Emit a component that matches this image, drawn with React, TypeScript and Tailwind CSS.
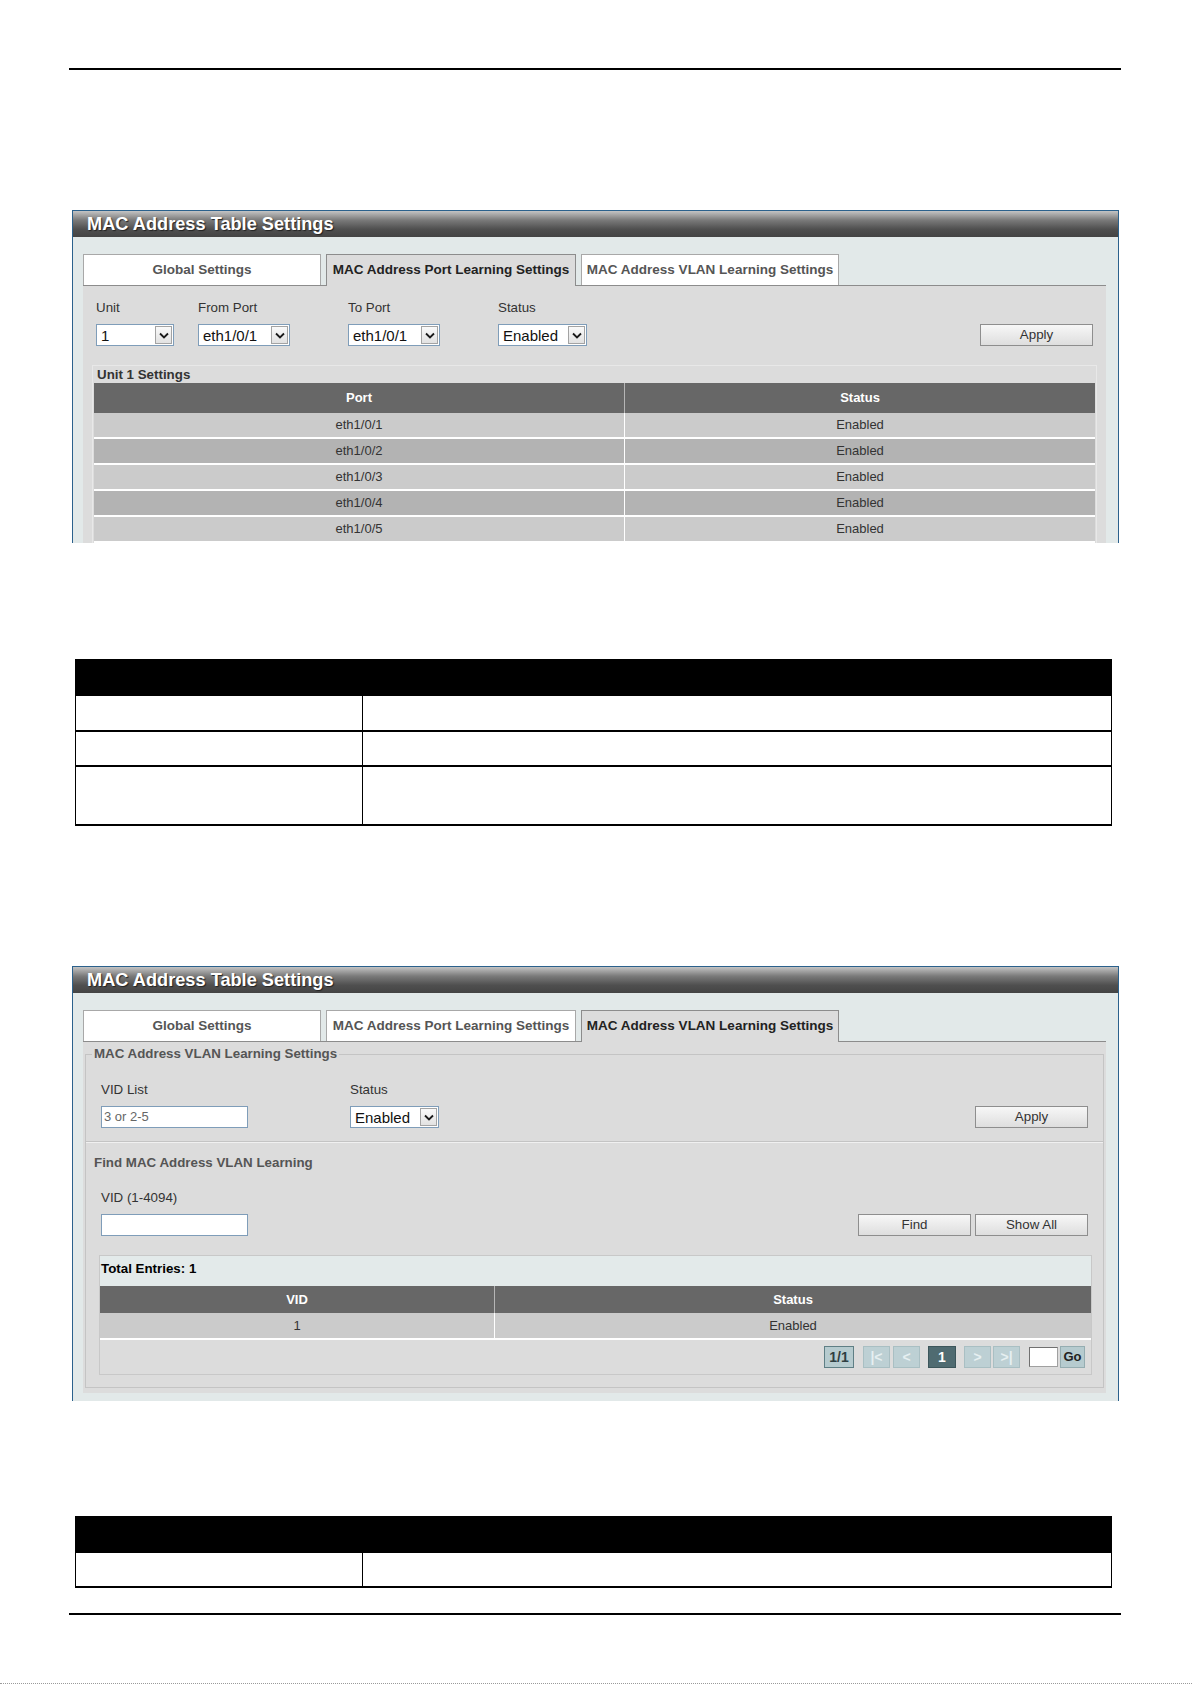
import React from "react";

const TABS = [
  { label: "Global Settings", w: "w-[238px]" },
  { label: "MAC Address Port Learning Settings", w: "w-[250px]" },
  { label: "MAC Address VLAN Learning Settings", w: "w-[258px]" },
];

const PORTS = ["eth1/0/1", "eth1/0/2", "eth1/0/3", "eth1/0/4", "eth1/0/5"];

function Chevron() {
  return (
    <svg width="10" height="7" viewBox="0 0 10 7">
      <path d="M1 1.5l4 4 4-4" fill="none" stroke="#1a1a1a" strokeWidth="1.8" />
    </svg>
  );
}

function Select({ value, w }: { value: string; w: string }) {
  return (
    <div className={`${w} h-[22px] flex items-center bg-white border border-[#7f9db9] pl-[4px] pr-px text-[15px] text-[#111]`}>
      <span className="flex-1 leading-none">{value}</span>
      <span className="w-[17px] h-[18px] flex items-center justify-center border border-[#a3a3a3] bg-[linear-gradient(#fafafa,#e2e2e2)]">
        <Chevron />
      </span>
    </div>
  );
}

function TextInput({ value }: { value: string }) {
  return (
    <div className="w-[147px] h-[22px] flex items-center bg-white border border-[#7f9db9] pl-[2px] text-[13px] text-[#666]">
      {value}
    </div>
  );
}

function Btn({ children, className = "" }: { children: React.ReactNode; className?: string }) {
  return (
    <button className={`w-[113px] h-[22px] flex items-center justify-center border border-[#8e8e8e] bg-[linear-gradient(#f7f7f7,#dedede)] text-[13.33px] text-[#333] ${className}`}>
      {children}
    </button>
  );
}

function Field({ label, w, children }: { label: string; w: string; children: React.ReactNode }) {
  return (
    <div className={w}>
      <div className="text-[13.33px] leading-[16px] text-[#333] mb-[8px]">{label}</div>
      {children}
    </div>
  );
}

function Tabs({ active }: { active: number }) {
  return (
    <div className="flex items-end gap-[5px] border-b border-[#8c8c8c]">
      {TABS.map((t, i) =>
        i === active ? (
          <div
            key={t.label}
            className={`${t.w} h-[32px] -mb-px flex items-center justify-center bg-[#dcdcdc] border border-b-0 border-[#8c8c8c] text-[13.5px] font-bold text-[#222]`}
          >
            {t.label}
          </div>
        ) : (
          <div
            key={t.label}
            className={`${t.w} h-[31px] flex items-center justify-center bg-white border border-b-0 border-[#a8a8a8] text-[13.5px] font-bold text-[#555]`}
          >
            {t.label}
          </div>
        )
      )}
    </div>
  );
}

function Panel({ active, className = "", children }: { active: number; className?: string; children: React.ReactNode }) {
  return (
    <div className={`ml-[72px] w-[1047px] border border-b-0 border-[#2b618c] bg-[#e2e9e9] ${className}`}>
      <div className="h-[26px] pl-[14px] bg-[linear-gradient(to_bottom,#c4c4c4_0%,#7a7a7a_35%,#4f4f4f_70%,#444444_100%)] text-[18.2px] leading-[26px] font-bold text-white [text-shadow:1px_1px_1px_#222]">
        MAC Address Table Settings
      </div>
      <div className="pt-[17px] pl-[10px] pr-[12px] pb-[8px]">
        <Tabs active={active} />
        {children}
      </div>
    </div>
  );
}

function DocTable({ rows }: { rows: string[] }) {
  return (
    <div className="ml-[75px] w-[1037px]">
      <div className="h-[37px] bg-black" />
      {rows.map((h, i) => (
        <div key={i} className={`${h} flex border-x border-b-2 border-black`}>
          <div className="w-[287px] border-r border-black" />
          <div className="flex-1" />
        </div>
      ))}
    </div>
  );
}

function PortPanel() {
  return (
    <Panel active={1} className="h-[333px] overflow-hidden">
      <div className="bg-[#dcdcdc] pt-[14px] px-[9px] pb-[20px]">
        <div className="flex items-start px-[4px]">
          <Field label="Unit" w="w-[102px]">
            <Select value="1" w="w-[78px]" />
          </Field>
          <Field label="From Port" w="w-[150px]">
            <Select value="eth1/0/1" w="w-[92px]" />
          </Field>
          <Field label="To Port" w="w-[150px]">
            <Select value="eth1/0/1" w="w-[92px]" />
          </Field>
          <Field label="Status" w="w-[120px]">
            <Select value="Enabled" w="w-[89px]" />
          </Field>
          <Btn className="ml-auto mt-[24px]">Apply</Btn>
        </div>

        <div className="mt-[19px] border border-[#e8e8e8] px-px">
          <div className="h-[17px] pl-[3px] text-[13.33px] leading-[17px] font-bold text-[#333]">Unit 1 Settings</div>
          <div className="flex h-[30px] bg-[#676767] text-[13px] font-bold text-white">
            <div className="w-[531px] flex items-center justify-center border-r border-[#b5b5b5]">Port</div>
            <div className="flex-1 flex items-center justify-center">Status</div>
          </div>
          {PORTS.map((p, i) => (
            <div
              key={p}
              className={`flex h-[26px] border-b-2 border-white text-[13px] text-[#333] ${i % 2 === 0 ? "bg-[#cbcbcb]" : "bg-[#b3b3b3]"}`}
            >
              <div className="w-[531px] flex items-center justify-center border-r border-white">{p}</div>
              <div className="flex-1 flex items-center justify-center">Enabled</div>
            </div>
          ))}
        </div>
      </div>
    </Panel>
  );
}

function PgBtn({ kind, children }: { kind: "info" | "off" | "cur"; children: React.ReactNode }) {
  const look =
    kind === "info"
      ? "w-[30px] bg-[#b6cbcf] border-[#5f7f85] text-[#2f3f42]"
      : kind === "cur"
      ? "w-[28px] bg-[#4f6b71] border-[#3c565b] text-white"
      : "w-[27px] bg-[#bdd0d4] border-[#a9bfc3] text-[#e6eff1]";
  return (
    <div className={`h-[22px] flex items-center justify-center border text-[14px] font-bold ${look}`}>{children}</div>
  );
}

function VlanPanel() {
  return (
    <Panel active={2}>
      <div className="bg-[#dcdcdc] px-[2px] pt-[4px] pb-[5px]">
        <fieldset className="border border-[#c4c4c4] pb-[12px]">
          <legend className="ml-[6px] px-[2px] text-[13.33px] leading-[16px] font-bold text-[#555]">
            MAC Address VLAN Learning Settings
          </legend>
          <div className="flex items-start pt-[20px] px-[15px]">
            <Field label="VID List" w="w-[249px]">
              <TextInput value="3 or 2-5" />
            </Field>
            <Field label="Status" w="w-[120px]">
              <Select value="Enabled" w="w-[89px]" />
            </Field>
            <Btn className="ml-auto mt-[24px]">Apply</Btn>
          </div>

          <div className="mt-[13px] border-t border-[#c4c4c4] border-b border-b-[#f0f0f0]" />

          <div className="pl-[8px] pt-[12px] text-[13.33px] leading-[16px] font-bold text-[#555]">
            Find MAC Address VLAN Learning
          </div>
          <div className="flex items-end pt-[19px] px-[15px]">
            <div className="w-[249px]">
              <div className="text-[13.33px] leading-[16px] text-[#333] mb-[8px]">VID (1-4094)</div>
              <TextInput value="" />
            </div>
            <div className="ml-auto flex gap-[4px]">
              <Btn>Find</Btn>
              <Btn>Show All</Btn>
            </div>
          </div>

          <div className="mt-[19px] ml-[13px] mr-[11px] border border-[#c8c8c8] bg-[#dcdcdc]">
            <div className="h-[30px] flex items-center pb-[4px] pl-px bg-[#e3eaea] text-[13.33px] font-bold text-black">
              Total Entries: 1
            </div>
            <div className="flex h-[27px] bg-[#676767] text-[13px] font-bold text-white">
              <div className="w-[395px] flex items-center justify-center border-r border-[#b5b5b5]">VID</div>
              <div className="flex-1 flex items-center justify-center">Status</div>
            </div>
            <div className="flex h-[27px] bg-[#cbcbcb] border-b-2 border-white text-[13px] text-[#333]">
              <div className="w-[395px] flex items-center justify-center border-r border-white">1</div>
              <div className="flex-1 flex items-center justify-center">Enabled</div>
            </div>
            <div className="flex items-center justify-end py-[6px] pr-[6px]">
              <PgBtn kind="info">1/1</PgBtn>
              <div className="ml-[9px] flex gap-[3px]">
                <PgBtn kind="off">|&lt;</PgBtn>
                <PgBtn kind="off">&lt;</PgBtn>
              </div>
              <div className="ml-[8px]">
                <PgBtn kind="cur">1</PgBtn>
              </div>
              <div className="ml-[8px] flex gap-[2px]">
                <PgBtn kind="off">&gt;</PgBtn>
                <PgBtn kind="off">&gt;|</PgBtn>
              </div>
              <div className="ml-[9px] w-[29px] h-[20px] bg-white border border-[#a0a0a0] border-t-[#707070] border-l-[#707070]" />
              <div className="ml-[2px] w-[25px] h-[22px] flex items-center justify-center bg-[#b6cbcf] border border-[#95adb1] text-[13px] font-bold text-[#222]">
                Go
              </div>
            </div>
          </div>
        </fieldset>
      </div>
    </Panel>
  );
}

export default function App() {
  return (
    <div className="w-[1192px] h-[1684px] flex flex-col bg-white font-['Liberation_Sans',Arial,sans-serif]">
      <div className="mt-[68px] ml-[69px] w-[1052px] h-[2px] bg-black" />

      <div className="mt-[140px]">
        <PortPanel />
      </div>

      <div className="mt-[116px]">
        <DocTable rows={["h-[36px]", "h-[35px]", "h-[59px]"]} />
      </div>

      <div className="mt-[140px]">
        <VlanPanel />
      </div>

      <div className="mt-[115px]">
        <DocTable rows={["h-[35px]"]} />
      </div>

      <div className="mt-[25px] ml-[69px] w-[1052px] h-[2px] bg-black" />

      <div className="mt-auto h-px border-b border-dotted border-[#9a9a9a]" />
    </div>
  );
}
